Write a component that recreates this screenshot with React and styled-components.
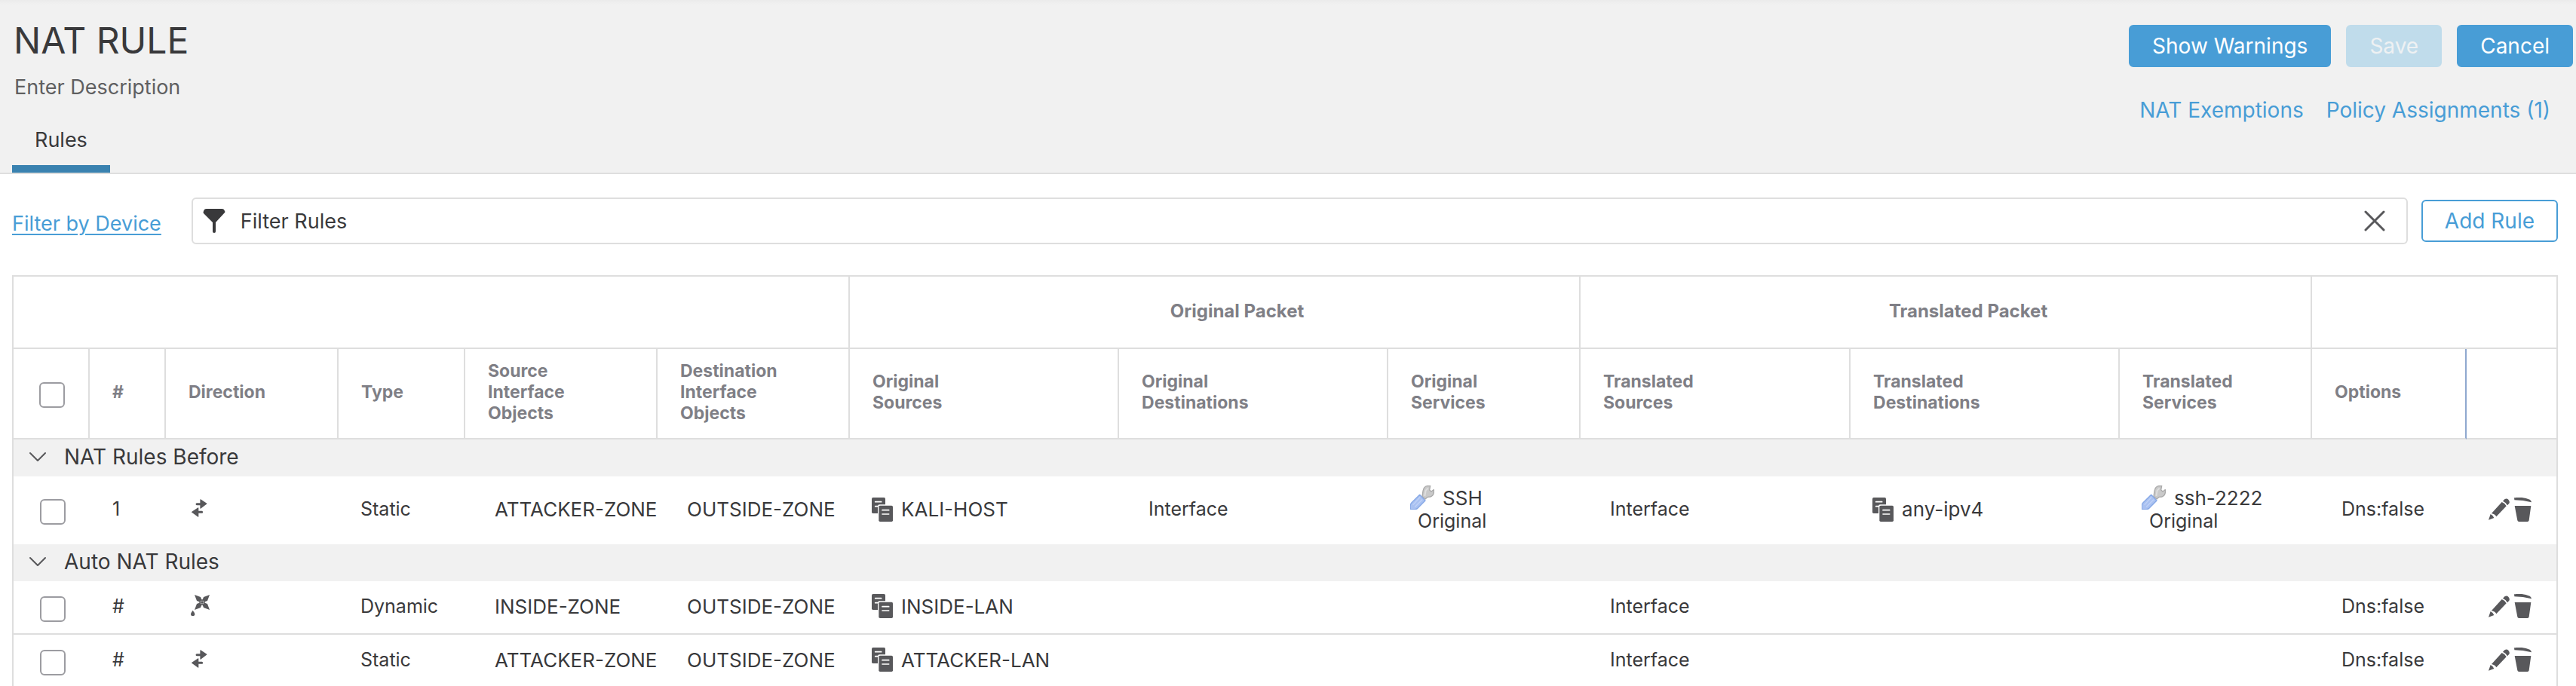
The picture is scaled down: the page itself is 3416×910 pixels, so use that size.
import React from "react";
import styled, { createGlobalStyle } from "styled-components";

const color = {
  text: "#39393b",
  muted: "#5f5f61",
  heading: "#7f7f86",
  line: "#dedede",
  panel: "#f1f1f1",
  blue: "#489dd6",
  tab: "#3a82b0",
  icon: "#58585b",
};

const GlobalStyle = createGlobalStyle`
  *, *::before, *::after { box-sizing: border-box; }
  body {
    margin: 0;
    background: #fff;
    color: ${color.text};
    font-family: Inter, "Liberation Sans", sans-serif;
    font-size: 25px;
    line-height: 31px;
  }
  button, input { font: inherit; color: inherit; }
  svg { display: block; flex: none; }
`;

const Page = styled.div`
  display: flex;
  flex-direction: column;
  height: 100vh;
`;

const Header = styled.header`
  display: flex;
  justify-content: space-between;
  padding: 24px 4px 0 16px;
  background: linear-gradient(#ebebeb, ${color.panel} 6px);
  border-bottom: 2px solid ${color.line};
`;

const Title = styled.h1`
  margin: 0;
  padding-left: 2px;
  font-size: 48px;
  line-height: 60px;
  font-weight: 400;
`;

const Description = styled.p`
  margin: 14px 0 34px;
  padding-left: 3px;
  font-size: 27px;
  line-height: 36px;
  color: ${color.muted};
`;

const Tab = styled.button`
  display: block;
  padding: 0 30px 15px;
  border: 0;
  border-bottom: 10px solid ${color.tab};
  background: none;
  font-size: 27px;
  line-height: 36px;
`;

const Actions = styled.div`
  display: flex;
  flex-direction: column;
  align-items: flex-end;
  padding-top: 9px;
`;

const ButtonRow = styled.div`
  display: flex;
  gap: 20px;
`;

const Button = styled.button`
  height: 56px;
  padding: 0 29px;
  border: 2px solid ${color.blue};
  border-radius: 6px;
  background: ${(p) => (p.$outline ? "#fff" : color.blue)};
  color: ${(p) => (p.$outline ? color.blue : "#fff")};
  font-size: 28px;
  white-space: nowrap;
  &:disabled {
    background: #c0dceb;
    border-color: #c0dceb;
    color: #eef1f3;
  }
`;

const LinkRow = styled.nav`
  display: flex;
  gap: 30px;
  margin-top: 39px;
  padding-right: 30px;
  font-size: 28px;
`;

const TextLink = styled.a`
  color: ${color.blue};
  line-height: 36px;
  text-decoration: none;
  white-space: nowrap;
`;

const Toolbar = styled.div`
  display: flex;
  align-items: center;
  gap: 18px;
  padding: 31px 24px 41px 16px;
  font-size: 27px;
`;

const DeviceLink = styled(TextLink)`
  padding: 8px 22px 0 0;
  text-decoration: underline;
  text-decoration-thickness: 2px;
  text-underline-offset: 4px;
`;

const SearchBox = styled.label`
  display: flex;
  flex: 1;
  align-items: center;
  height: 62px;
  padding: 0 28px 0 13px;
  border: 2px solid ${color.line};
  border-radius: 6px;
`;

const SearchInput = styled.input`
  flex: 1;
  min-width: 0;
  padding: 0 20px;
  border: 0;
  outline: 0;
  background: none;
  &::placeholder { color: ${color.text}; opacity: 1; }
`;

const IconButton = styled.button`
  padding: 0;
  border: 0;
  background: none;
  color: ${color.icon};
`;

const TablePanel = styled.main`
  flex: 1;
  min-height: 0;
  margin: 0 24px 0 16px;
  border: solid ${color.line};
  border-width: 2px 2px 0;
  overflow: auto;
  scrollbar-width: none;
`;

const Table = styled.table`
  width: 100%;
  table-layout: fixed;
  border-collapse: separate;
  border-spacing: 0;
`;

const Col = styled.col`
  width: ${(p) => p.$width}px;
`;

const GroupCell = styled.th`
  height: 96px;
  padding: 0 0 3px 60px;
  border-bottom: 2px solid ${color.line};
  border-right: 2px solid ${color.line};
  color: ${color.heading};
  font-size: 24px;
  line-height: 28px;
  &:last-child { border-right: 0; }
`;

const HeadCell = styled.th`
  height: 120px;
  padding: ${(p) => (p.$check ? "4px 0 0 34px" : "0 0 4px 30px")};
  border-bottom: 2px solid ${color.line};
  border-right: 2px solid ${(p) => (p.$active ? "#8fa8cf" : color.line)};
  color: ${color.heading};
  font-size: 23px;
  line-height: 28px;
  text-align: left;
  &:last-child { border-right: 0; }
`;

const HeadLabel = styled.span`
  display: block;
  max-width: 160px;
`;

const Check = styled.input`
  appearance: none;
  display: block;
  width: 34px;
  height: 34px;
  margin: 0;
  border: 2px solid #9c9ca1;
  border-radius: 6px;
  background: #fff;
`;

const SectionCell = styled.td`
  height: 49px;
  padding: 0 0 3px 20px;
  background: ${color.panel};
`;

const SectionToggle = styled.button`
  display: flex;
  align-items: center;
  gap: 23px;
  padding: 0;
  border: 0;
  background: none;
  font-size: 28px;
`;

const Row = styled.tr`
  height: ${(p) => (p.$tall ? 90 : 71)}px;
`;

const cellPadding = {
  check: "4px 0 0 35px",
  icon: "0 0 6px 33px",
  number: "0 0 3px 30px",
  plain: "0 0 3px 29px",
  inset: "0 0 3px 39px",
  zone: "0 0 3px 39px",
};

const Cell = styled.td`
  padding: ${(p) => cellPadding[p.$kind || "plain"]};
  border-bottom: ${(p) => (p.$ruled ? `2px solid ${color.line}` : "0")};
  font-size: ${(p) => (p.$kind === "zone" ? 26 : 25)}px;
  overflow: hidden;
  white-space: nowrap;
`;

const ObjectItem = styled.div`
  display: flex;
  align-items: center;
  gap: 11px;
  font-size: 26px;
`;

const PlainItem = styled.div`
  padding-left: 10px;
`;

const RowActions = styled.div`
  display: flex;
  align-items: center;
  gap: 6px;
`;

const FunnelIcon = () => (
  <svg width="30" height="32" viewBox="0 0 30 32" fill={color.text} aria-hidden="true">
    <path d="M5 0h20q2 0 3 1l1 2q1 1 0 2L17 18v12q0 2-2 2t-2-2V18L1 6Q0 5 1 3l1-2Q3 0 5 0z" />
  </svg>
);

const CloseIcon = () => (
  <svg width="28" height="28" viewBox="0 0 28 28" stroke="currentColor" strokeWidth="3" strokeLinecap="round" aria-hidden="true">
    <path d="M2 2l24 24M26 2L2 26" />
  </svg>
);

const ChevronIcon = () => (
  <svg width="24" height="14" viewBox="0 0 24 14" fill="none" stroke={color.icon} strokeWidth="2" strokeLinecap="round" strokeLinejoin="round" aria-hidden="true">
    <path d="M2 2l10 10L22 2" />
  </svg>
);

const StaticIcon = () => (
  <svg width="22" height="24" viewBox="-3 0 64 70" fill={color.icon} role="img" aria-label="Static">
    <path d="M20 15h13V2q0-2 2-1l24 16q1 1 0 2L35 37q-2 1-2-1V24H20q-4 0-4-4t4-5z" />
    <path d="M40 46H27V34q0-2-2-1L1 49q-2 2 0 3l24 17q2 1 2-1V55h13q4 0 4-4t-4-5z" />
  </svg>
);

const DynamicIcon = () => (
  <svg width="25" height="28" viewBox="0 0 75 84" fill={color.icon} role="img" aria-label="Dynamic">
    <path d="M15 0l24 9 4 10h4l4-10 24-9-9 24-10 4v4l10 4 9 24-24-9-4-10h-4l-4 10-24 9 9-24 10-4v-4l-10-4z" />
    <path d="M38 27h4v-4M52 27h-4v-4M38 33h4v4M52 33h-4v4" fill="none" stroke="#fff" strokeWidth="2" />
    <path d="M8 62q8 10 8 15 0 7-8 7t-8-7q0-5 8-15z" />
  </svg>
);

const HostIcon = () => (
  <svg width="28" height="32" viewBox="0 0 84 96" aria-hidden="true">
    <rect width="54" height="63" rx="5" fill={color.icon} />
    <path d="M14 17h24M14 35h12" stroke="#fff" strokeWidth="5" strokeLinecap="round" />
    <rect x="24" y="28" width="64" height="72" rx="7" fill="#fff" />
    <rect x="28" y="32" width="56" height="64" rx="5" fill={color.icon} />
    <path d="M42 50h26M42 66h26" stroke="#fff" strokeWidth="5" strokeLinecap="round" />
  </svg>
);

const WrenchIcon = () => (
  <svg width="32" height="32" viewBox="0 0 96 96" aria-hidden="true">
    <path d="M48 44L51 22Q54 4 68 2L80 1 77 18 84 24 94 17Q97 40 80 45L70 46 60 54z" fill="#c9c9c9" stroke="#a9a9a9" strokeWidth="4" strokeLinejoin="round" />
    <path d="M58 42l4-22 9-9" fill="none" stroke="#dedede" strokeWidth="6" />
    <path d="M38 37L60 60 28 92Q22 96 14 95L2 95Q0 92 1 78 2 72 6 68z" fill="#a9c1f1" stroke="#86a8e6" strokeWidth="4" strokeLinejoin="round" />
    <path d="M38 48L12 76M47 57L20 84" stroke="#c0d2f7" strokeWidth="4" strokeLinecap="round" />
  </svg>
);

const PencilIcon = () => (
  <svg width="28" height="29" viewBox="0 0 84 87" fill="currentColor" aria-hidden="true">
    <path d="M0 86L8 63q10 4 14 15zM12 60L53 15q12 4 18 16L31 73Q26 63 12 60zM57 11l7-7q8-6 15 1 7 8 3 15l-7 8Q69 16 57 11z" />
  </svg>
);

const TrashIcon = () => (
  <svg width="23" height="32" viewBox="0 0 69 96" fill="currentColor" aria-hidden="true">
    <path d="M0 1Q35-4 62 8q6 3 7 11Q35 10 1 10zM2 33h65l-8 58q-1 5-6 5H19q-5 0-6-5z" />
  </svg>
);

const columns = [
  { width: 101, check: true },
  { width: 101, label: "#" },
  { width: 229, label: "Direction" },
  { width: 168, label: "Type" },
  { width: 255, label: "Source Interface Objects" },
  { width: 255, label: "Destination Interface Objects" },
  { width: 357, label: "Original Sources" },
  { width: 357, label: "Original Destinations" },
  { width: 255, label: "Original Services" },
  { width: 358, label: "Translated Sources" },
  { width: 357, label: "Translated Destinations" },
  { width: 255, label: "Translated Services" },
  { width: 205, label: "Options", active: true },
  { width: 119 },
];

const sections = [
  {
    name: "NAT Rules Before",
    rules: [
      {
        number: "1", type: "Static", from: "ATTACKER-ZONE", to: "OUTSIDE-ZONE",
        source: "KALI-HOST", destination: "Interface", service: "SSH",
        newSource: "Interface", newDestination: "any-ipv4", newService: "ssh-2222",
      },
    ],
  },
  {
    name: "Auto NAT Rules",
    rules: [
      { number: "#", type: "Dynamic", from: "INSIDE-ZONE", to: "OUTSIDE-ZONE", source: "INSIDE-LAN", newSource: "Interface", ruled: true },
      { number: "#", type: "Static", from: "ATTACKER-ZONE", to: "OUTSIDE-ZONE", source: "ATTACKER-LAN", newSource: "Interface", ruled: true },
    ],
  },
];

const HostObject = ({ name }) => (
  <ObjectItem><HostIcon />{name}</ObjectItem>
);

const ServiceObject = ({ name }) => (
  <>
    <ObjectItem><WrenchIcon />{name}</ObjectItem>
    <PlainItem>Original</PlainItem>
  </>
);

const RuleRow = ({ rule }) => {
  const ruled = rule.ruled;
  return (
    <Row $tall={Boolean(rule.service)}>
      <Cell $kind="check" $ruled={ruled}><Check type="checkbox" aria-label={`Select ${rule.source}`} /></Cell>
      <Cell $kind="number" $ruled={ruled}>{rule.number}</Cell>
      <Cell $kind="icon" $ruled={ruled}>{rule.type === "Static" ? <StaticIcon /> : <DynamicIcon />}</Cell>
      <Cell $ruled={ruled}>{rule.type}</Cell>
      <Cell $kind="zone" $ruled={ruled}>{rule.from}</Cell>
      <Cell $kind="zone" $ruled={ruled}>{rule.to}</Cell>
      <Cell $ruled={ruled}><HostObject name={rule.source} /></Cell>
      <Cell $kind="inset" $ruled={ruled}>{rule.destination}</Cell>
      <Cell $ruled={ruled}>{rule.service && <ServiceObject name={rule.service} />}</Cell>
      <Cell $kind="inset" $ruled={ruled}>{rule.newSource}</Cell>
      <Cell $ruled={ruled}>{rule.newDestination && <HostObject name={rule.newDestination} />}</Cell>
      <Cell $ruled={ruled}>{rule.newService && <ServiceObject name={rule.newService} />}</Cell>
      <Cell $kind="inset" $ruled={ruled}>Dns:false</Cell>
      <Cell $ruled={ruled}>
        <RowActions>
          <IconButton type="button" aria-label="Edit rule"><PencilIcon /></IconButton>
          <IconButton type="button" aria-label="Delete rule"><TrashIcon /></IconButton>
        </RowActions>
      </Cell>
    </Row>
  );
};

export default function App() {
  return (
    <Page>
      <GlobalStyle />
      <Header>
        <div>
          <Title>NAT RULE</Title>
          <Description>Enter Description</Description>
          <Tab type="button">Rules</Tab>
        </div>
        <Actions>
          <ButtonRow>
            <Button type="button">Show Warnings</Button>
            <Button type="button" disabled>Save</Button>
            <Button type="button">Cancel</Button>
          </ButtonRow>
          <LinkRow>
            <TextLink href="#exemptions">NAT Exemptions</TextLink>
            <TextLink href="#assignments">Policy Assignments (1)</TextLink>
          </LinkRow>
        </Actions>
      </Header>
      <Toolbar>
        <DeviceLink href="#devices">Filter by Device</DeviceLink>
        <SearchBox>
          <FunnelIcon />
          <SearchInput type="text" aria-label="Filter Rules" placeholder="Filter Rules" />
          <IconButton type="button" aria-label="Clear filter"><CloseIcon /></IconButton>
        </SearchBox>
        <Button type="button" $outline>Add Rule</Button>
      </Toolbar>
      <TablePanel>
        <Table>
          <colgroup>
            {columns.map((c, i) => <Col key={i} $width={c.width} />)}
          </colgroup>
          <thead>
            <tr>
              <GroupCell colSpan={6} />
              <GroupCell colSpan={3} scope="colgroup">Original Packet</GroupCell>
              <GroupCell colSpan={3} scope="colgroup">Translated Packet</GroupCell>
              <GroupCell colSpan={2} />
            </tr>
            <tr>
              {columns.map((c, i) => (
                <HeadCell key={i} scope="col" $check={c.check} $active={c.active}>
                  {c.check && <Check type="checkbox" aria-label="Select all rules" />}
                  {c.label && <HeadLabel>{c.label}</HeadLabel>}
                </HeadCell>
              ))}
            </tr>
          </thead>
          {sections.map((section) => (
            <tbody key={section.name}>
              <tr>
                <SectionCell colSpan={14}>
                  <SectionToggle type="button" aria-expanded="true">
                    <ChevronIcon />{section.name}
                  </SectionToggle>
                </SectionCell>
              </tr>
              {section.rules.map((rule, i) => <RuleRow key={i} rule={rule} />)}
            </tbody>
          ))}
        </Table>
      </TablePanel>
    </Page>
  );
}
